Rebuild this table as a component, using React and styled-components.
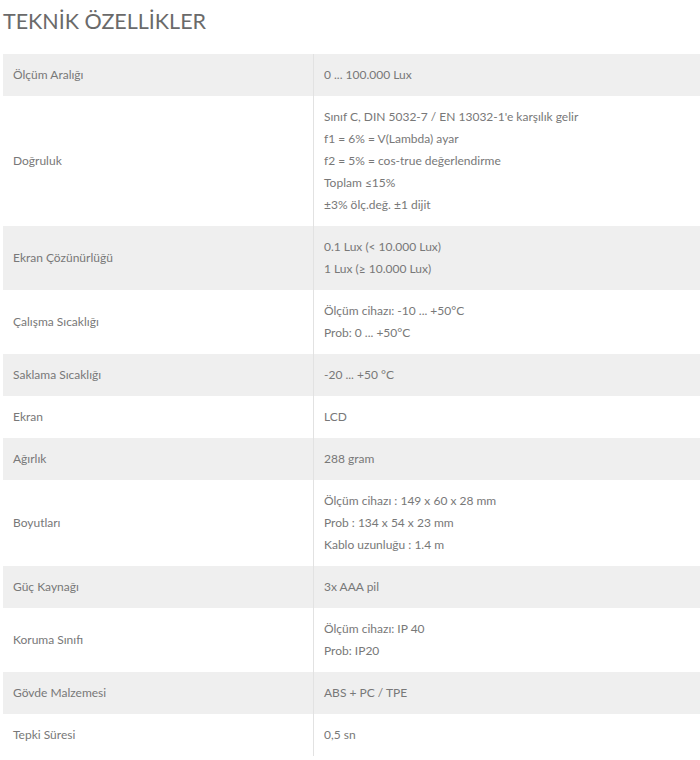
import styled, { createGlobalStyle } from "styled-components";

const GlobalStyle = createGlobalStyle`
  body {
    margin: 0;
    background: #ffffff;
    font-family: Lato, "Open Sans", sans-serif;
  }
`;

const Page = styled.div`
  padding: 0 0 0 3px;
  width: 697px;
`;

const Title = styled.h2`
  margin: 0;
  padding: 8px 0 0 0;
  height: 54px;
  box-sizing: border-box;
  font-size: 21.5px;
  line-height: 26px;
  font-weight: 400;
  color: #6a6a6a;
`;

const Table = styled.div`
  display: grid;
  grid-template-columns: 310px 1fr;
`;

const Row = styled.div`
  display: contents;
`;

const Cell = styled.div`
  background: ${(p) => (p.$shaded ? "#efefef" : "#ffffff")};
  padding: 10px 10px;
  font-size: 12px;
  line-height: 22px;
  color: #787878;
  display: flex;
  flex-direction: column;
  justify-content: center;
  border-left: ${(p) => (p.$value ? "1px solid #e2e2e2" : "none")};
`;

const specs = [
  ["Ölçüm Aralığı", ["0 ... 100.000 Lux"]],
  [
    "Doğruluk",
    [
      "Sınıf C, DIN 5032-7 / EN 13032-1'e karşılık gelir",
      "f1 = 6% = V(Lambda) ayar",
      "f2 = 5% = cos-true değerlendirme",
      "Toplam ≤15%",
      "±3% ölç.değ. ±1 dijit",
    ],
  ],
  ["Ekran Çözünürlüğü", ["0.1 Lux (< 10.000 Lux)", "1 Lux (≥ 10.000 Lux)"]],
  ["Çalışma Sıcaklığı", ["Ölçüm cihazı: -10 ... +50°C", "Prob: 0 ... +50°C"]],
  ["Saklama Sıcaklığı", ["-20 ... +50 °C"]],
  ["Ekran", ["LCD"]],
  ["Ağırlık", ["288 gram"]],
  [
    "Boyutları",
    [
      "Ölçüm cihazı : 149 x 60 x 28 mm",
      "Prob : 134 x 54 x 23 mm",
      "Kablo uzunluğu : 1.4 m",
    ],
  ],
  ["Güç Kaynağı", ["3x AAA pil"]],
  ["Koruma Sınıfı", ["Ölçüm cihazı: IP 40", "Prob: IP20"]],
  ["Gövde Malzemesi", ["ABS + PC / TPE"]],
  ["Tepki Süresi", ["0,5 sn"]],
];

const App = () => {
  return (
    <>
      <GlobalStyle />
      <Page>
        <Title>TEKNİK ÖZELLİKLER</Title>
        <Table>
          {specs.map(([label, lines], i) => (
            <Row key={label}>
              <Cell $shaded={i % 2 === 0}>{label}</Cell>
              <Cell $shaded={i % 2 === 0} $value>
                {lines.map((line) => (
                  <span key={line}>{line}</span>
                ))}
              </Cell>
            </Row>
          ))}
        </Table>
      </Page>
    </>
  );
};

export default App;
